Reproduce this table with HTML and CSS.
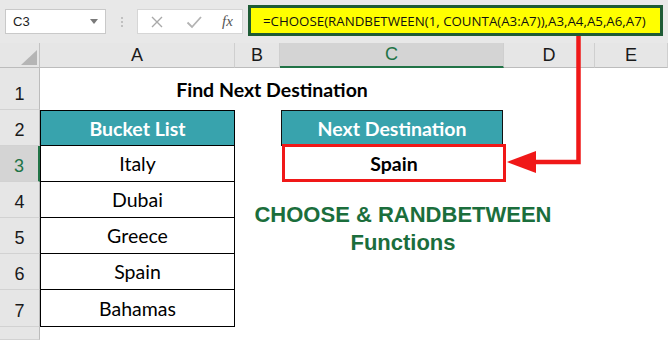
FILE: index.html
```html
<!DOCTYPE html>
<html lang="en">
<head>
<meta charset="utf-8">
<title>Find Next Destination</title>
<link rel="stylesheet" href="styles.css">
</head>
<body>
<div class="app">
  <div class="toolbar">
    <div class="namebox">
      <span>C3</span>
      <svg class="caret" width="8" height="5" viewBox="0 0 8 5"><polygon points="0,0 8,0 4,5" fill="#7a7a7a"/></svg>
    </div>
    <div class="grip"><i></i><i></i><i></i></div>
    <div class="fbuttons">
      <svg class="icon-cancel" width="14" height="14" viewBox="0 0 14 14"><path d="M2 2 L12 12 M12 2 L2 12" stroke="#a9a9a9" stroke-width="1.4" fill="none"/></svg>
      <svg class="icon-enter" width="16" height="14" viewBox="0 0 16 14"><path d="M1.5 7.5 L6 12 L15 2" stroke="#b3b3b3" stroke-width="1.8" fill="none"/></svg>
      <span class="fx">fx</span>
    </div>
    <div class="formula">=CHOOSE(RANDBETWEEN(1, COUNTA(A3:A7)),A3,A4,A5,A6,A7)</div>
  </div>

  <div class="sheet">
    <div class="corner"><span class="corner-mark"></span></div>
    <div class="colhead">A</div>
    <div class="colhead">B</div>
    <div class="colhead active">C</div>
    <div class="colhead">D</div>
    <div class="colhead">E</div>

    <div class="caption">CHOOSE &amp; RANDBETWEEN<br>Functions</div>

    <div class="rowhead">1</div>
    <div class="title">Find Next Destination</div>

    <div class="rowhead">2</div>
    <div class="list-head">Bucket List</div>
    <div class="dest-head">Next Destination</div>

    <div class="rowhead active">3</div>
    <div class="list-cell">Italy</div>
    <div class="dest-cell">Spain</div>

    <div class="rowhead">4</div>
    <div class="list-cell">Dubai</div>

    <div class="rowhead">5</div>
    <div class="list-cell">Greece</div>

    <div class="rowhead">6</div>
    <div class="list-cell">Spain</div>

    <div class="rowhead">7</div>
    <div class="list-cell">Bahamas</div>

    <div class="rowhead"></div>
  </div>

  <svg class="pointer" width="668" height="340" viewBox="0 0 668 340">
    <polyline points="578.5,36 578.5,162 532,162" stroke="#f01818" stroke-width="4.5" fill="none"/>
    <polygon points="507,162 536,151 536,173" fill="#f01818"/>
  </svg>
</div>
</body>
</html>
```
FILE: styles.css
```css
* { box-sizing: border-box; }

body {
  margin: 0;
  background: #fff;
  font-family: "Liberation Sans", Arial, sans-serif;
}

.app {
  position: relative;
  width: 668px;
  height: 340px;
  overflow: hidden;
}

/* formula bar */
.toolbar {
  display: flex;
  align-items: flex-start;
  height: 43px;
  padding-left: 5px;
  background: #e8e8e8;
}

.namebox {
  margin-top: 9px;
  width: 101px;
  height: 25px;
  display: flex;
  align-items: center;
  justify-content: space-between;
  padding: 0 7px;
  background: #fff;
  border: 1px solid #c9c9c9;
  font-size: 13px;
  color: #222;
}

.grip {
  width: 31px;
  height: 43px;
  display: flex;
  flex-direction: column;
  align-items: center;
  justify-content: center;
  gap: 2px;
}

.grip i {
  display: block;
  width: 2px;
  height: 2px;
  border-radius: 50%;
  background: #b3b3b3;
}

.fbuttons {
  margin-top: 9px;
  width: 106px;
  height: 25px;
  display: flex;
  align-items: center;
  background: #fff;
  border: 1px solid #d6d6d6;
}

.icon-cancel { margin-left: 12px; }
.icon-enter { margin-left: 22px; }

.fx {
  margin-left: 20px;
  font-family: "Liberation Serif", serif;
  font-style: italic;
  font-size: 15px;
  color: #555;
}

.formula {
  margin-left: 5px;
  margin-top: 5px;
  width: 415px;
  height: 31px;
  display: flex;
  align-items: center;
  padding-left: 12px;
  background: #ffff00;
  border: 3px solid #1e5b35;
  font-family: "Open Sans", sans-serif;
  font-size: 13.3px;
  color: #111;
  white-space: nowrap;
}

/* worksheet grid */
.sheet {
  display: grid;
  grid-template-columns: 40px 195px 45px 224px 91px 73px;
  grid-template-rows: 25px 42px 36px 36px 36px 36px 36px 37px 13px;
}

.corner {
  grid-column: 1;
  display: flex;
  align-items: flex-end;
  justify-content: flex-end;
  padding: 0 2px 2px 0;
  background: #e6e6e6;
  border-right: 1px solid #c3c3c3;
  border-bottom: 1px solid #bcbcbc;
}

.corner-mark {
  width: 16px;
  height: 15px;
  background: #b5b5b5;
  clip-path: polygon(100% 0, 100% 100%, 0 100%);
}

.colhead {
  display: flex;
  align-items: center;
  justify-content: center;
  background: #e6e6e6;
  border-right: 1px solid #cfcfcf;
  border-bottom: 1px solid #bcbcbc;
  font-size: 18px;
  color: #1a1a1a;
}

.colhead.active {
  background: #d4d4d4;
  border-bottom: 2px solid #217346;
  color: #217346;
}

.rowhead {
  grid-column: 1;
  display: flex;
  align-items: flex-end;
  justify-content: center;
  padding-bottom: 4px;
  background: #e6e6e6;
  border-right: 1px solid #bcbcbc;
  border-bottom: 1px solid #d2d2d2;
  font-size: 18px;
  color: #1a1a1a;
}

.rowhead.active {
  background: #d4d4d4;
  border-right: 2px solid #217346;
  color: #217346;
}

.title,
.list-head,
.list-cell,
.dest-head,
.dest-cell {
  display: flex;
  align-items: center;
  justify-content: center;
  font-family: Lato, "Liberation Sans", sans-serif;
  font-size: 19.5px;
  color: #000;
}

.title {
  grid-column: 2 / span 3;
  font-weight: 700;
}

.list-head {
  grid-column: 2;
  background: #38a3ad;
  border: 1px solid #000;
  color: #fff;
  font-weight: 700;
}

.list-cell {
  grid-column: 2;
  border: 1px solid #000;
  border-top: 0;
}

.dest-head {
  grid-column: 4;
  margin: 0 1px;
  background: #38a3ad;
  border: 1px solid #111;
  color: #fff;
  font-weight: 700;
}

.dest-cell {
  grid-column: 4;
  margin: -2px -2px 0 2px;
  border: 3px solid #f01818;
  background: #fff;
  font-weight: 700;
}

.caption {
  grid-column: 3 / span 3;
  grid-row: 5 / span 2;
  padding: 19px 24px 0 0;
  text-align: center;
  font-family: "Liberation Sans", Arial, sans-serif;
  font-weight: 700;
  font-size: 22px;
  line-height: 28px;
  color: #1b6e3c;
}

/* callout arrow from the formula to the result cell */
.pointer {
  position: absolute;
  top: 0;
  left: 0;
  pointer-events: none;
}
```
